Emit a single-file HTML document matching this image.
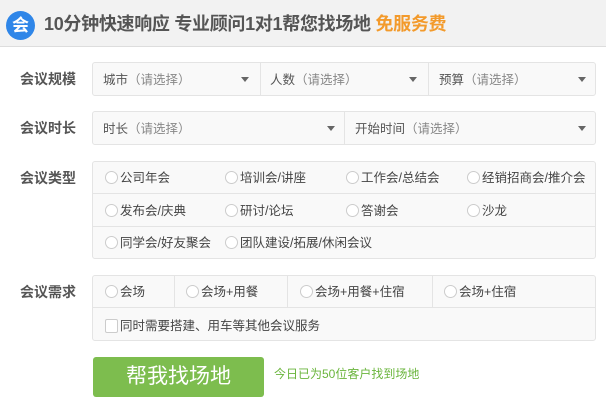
<!DOCTYPE html>
<html><head><meta charset="utf-8"><style>
*{margin:0;padding:0;box-sizing:border-box}
body{width:606px;height:405px;background:#fff;font-family:"Liberation Sans","Noto Sans CJK SC",sans-serif;position:relative;overflow:hidden;color:#333}
.hd{position:absolute;left:0;top:0;width:606px;height:47px;background:#f2f2f2;border-bottom:1px solid #ddd}
.logo{position:absolute;left:6px;top:11px;width:29px;height:29px;border-radius:50%;background:#2f86e8;color:#fff;font-size:17px;font-weight:bold;text-align:center;line-height:29px}
.ht{position:absolute;left:44px;top:13px;font-size:18px;line-height:22px;font-weight:bold;color:#555;white-space:nowrap;letter-spacing:-0.3px}
.ht span{color:#f39a2b}
.lb{position:absolute;left:20px;font-size:14px;line-height:16px;color:#555;font-weight:bold}
.box{position:absolute;left:92px;width:504px;background:#f9f9f9;border:1px solid #e4e4e4;border-radius:3px}
.c{position:absolute;top:0;height:100%;border-left:1px solid #e4e4e4}
.r{position:absolute;left:0;width:100%;border-top:1px solid #e4e4e4}
.t{position:absolute;font-size:12.5px;line-height:14px;color:#555;white-space:nowrap}
.t i{font-style:normal;color:#888}
.ar{position:absolute;width:0;height:0;border-left:4px solid transparent;border-right:4px solid transparent;border-top:5px solid #666}
.rd{position:absolute;width:13px;height:13px;border:1px solid #ccc;border-radius:50%;background:#fff}
.o{position:absolute;font-size:12.5px;line-height:14px;color:#444;white-space:nowrap}
.btn{position:absolute;left:93px;top:357px;width:171px;height:40px;background:#7dbd4e;border-radius:3px;color:#fff;font-size:21px;text-align:center;line-height:40px}
.gt{position:absolute;left:274px;top:367px;font-size:12px;line-height:14px;color:#6ab53c}
</style></head><body>
<div class="hd"><div class="logo">会</div><div class="ht">10分钟快速响应 专业顾问1对1帮您找场地 <span>免服务费</span></div></div>

<div class="lb" style="top:71px">会议规模</div>
<div class="box" style="top:62px;height:34px">
<div class="c" style="left:167px"></div><div class="c" style="left:335px"></div>
<div class="t" style="left:10px;top:10px">城市<i>（请选择）</i></div><div class="ar" style="left:148px;top:14px"></div>
<div class="t" style="left:177px;top:10px">人数<i>（请选择）</i></div><div class="ar" style="left:316px;top:14px"></div>
<div class="t" style="left:346px;top:10px">预算<i>（请选择）</i></div><div class="ar" style="left:485px;top:14px"></div>
</div>

<div class="lb" style="top:120px">会议时长</div>
<div class="box" style="top:111px;height:34px">
<div class="c" style="left:251px"></div>
<div class="t" style="left:10px;top:10px">时长<i>（请选择）</i></div><div class="ar" style="left:234px;top:14px"></div>
<div class="t" style="left:262px;top:10px">开始时间<i>（请选择）</i></div><div class="ar" style="left:485px;top:14px"></div>
</div>

<div class="lb" style="top:170px">会议类型</div>
<div class="box" style="top:161px;height:98px">
<div class="r" style="top:31px"></div><div class="r" style="top:64px"></div>
<div class="rd" style="left:12px;top:9px"></div><div class="o" style="left:27px;top:9px">公司年会</div>
<div class="rd" style="left:132px;top:9px"></div><div class="o" style="left:147px;top:9px">培训会/讲座</div>
<div class="rd" style="left:253px;top:9px"></div><div class="o" style="left:268px;top:9px">工作会/总结会</div>
<div class="rd" style="left:374px;top:9px"></div><div class="o" style="left:389px;top:9px">经销招商会/推介会</div>
<div class="rd" style="left:12px;top:42px"></div><div class="o" style="left:27px;top:42px">发布会/庆典</div>
<div class="rd" style="left:132px;top:42px"></div><div class="o" style="left:147px;top:42px">研讨/论坛</div>
<div class="rd" style="left:253px;top:42px"></div><div class="o" style="left:268px;top:42px">答谢会</div>
<div class="rd" style="left:374px;top:42px"></div><div class="o" style="left:389px;top:42px">沙龙</div>
<div class="rd" style="left:12px;top:74px"></div><div class="o" style="left:27px;top:74px">同学会/好友聚会</div>
<div class="rd" style="left:132px;top:74px"></div><div class="o" style="left:147px;top:74px">团队建设/拓展/休闲会议</div>
</div>

<div class="lb" style="top:284px">会议需求</div>
<div class="box" style="top:275px;height:66px">
<div class="c" style="left:81px;height:32px"></div><div class="c" style="left:194px;height:32px"></div><div class="c" style="left:339px;height:32px"></div>
<div class="r" style="top:31px"></div>
<div class="rd" style="left:12px;top:9px"></div><div class="o" style="left:27px;top:9px">会场</div>
<div class="rd" style="left:93px;top:9px"></div><div class="o" style="left:108px;top:9px">会场+用餐</div>
<div class="rd" style="left:207px;top:9px"></div><div class="o" style="left:222px;top:9px">会场+用餐+住宿</div>
<div class="rd" style="left:351px;top:9px"></div><div class="o" style="left:366px;top:9px">会场+住宿</div>
<div style="position:absolute;left:12px;top:43px;width:13px;height:14px;border:1px solid #ccc;border-radius:2px;background:#fff"></div>
<div class="o" style="left:27px;top:43px">同时需要搭建、用车等其他会议服务</div>
</div>

<div class="btn">帮我找场地</div>
<div class="gt">今日已为50位客户找到场地</div>
</body></html>
